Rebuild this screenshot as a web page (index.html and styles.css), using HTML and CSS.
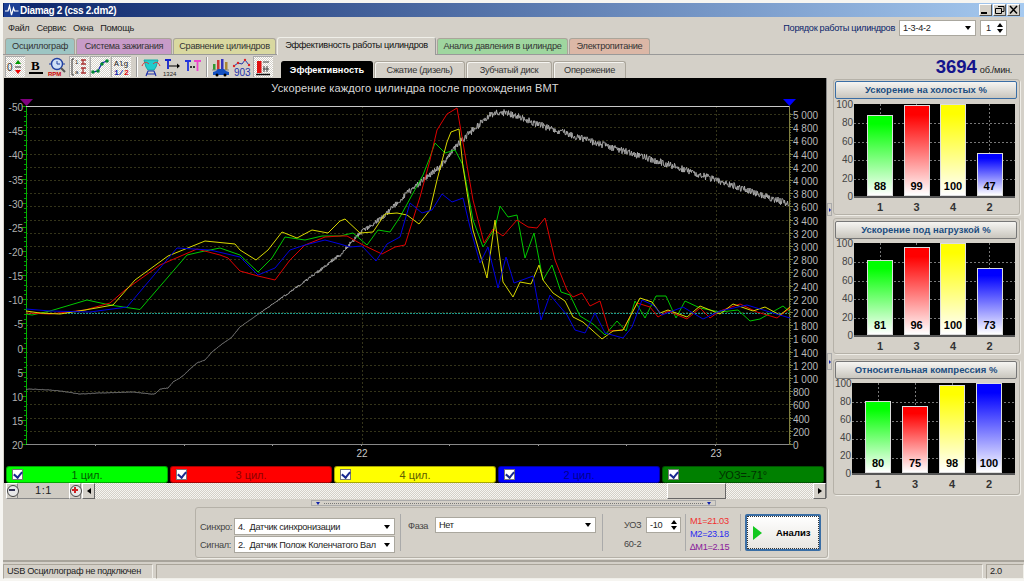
FILE: index.html
```html
<!DOCTYPE html>
<html lang="ru">
<head>
    <meta charset="UTF-8">
    <title>Diamag 2</title>
    <link rel="stylesheet" href="styles.css">
</head>
<body>
<div class="window">
    <div class="titlebar">
        <svg class="app-icon" width="16" height="14" viewBox="0 0 16 14"><rect width="16" height="14" fill="#1c3f94"/><path d="M1 8h3l1.500-5 2 9 2-7 1 3h4" fill="none" stroke="#fff" stroke-width="1.200"/></svg>
        <span class="app-name">Diamag 2 (css 2.dm2)</span>
        <div class="win-buttons">
            <div class="win-btn"><svg width="11" height="10" viewBox="0 0 11 10"><rect x="1" y="7" width="6" height="2" fill="#000"/></svg></div>
            <div class="win-btn"><svg width="11" height="10" viewBox="0 0 11 10"><path d="M4 1.500h6v5H8M1.500 3.500h6v5h-6z" fill="none" stroke="#000"/></svg></div>
            <div class="win-btn"><svg width="11" height="10" viewBox="0 0 11 10"><path d="M2 1l7 7.500M9 1L2 8.500" stroke="#000" stroke-width="1.500"/></svg></div>
        </div>
    </div>

    <div class="menubar">
        <span>Файл</span><span>Сервис</span><span>Окна</span><span>Помощь</span>
        <div class="cyl-order">
            <span class="cyl-label">Порядок работы цилиндров</span>
            <div class="combo combo-order"><span>1-3-4-2</span><i class="down"></i></div>
            <div class="spin spin-order"><span>1</span><div class="spin-arrows"><i class="up"></i><i class="down"></i></div></div>
        </div>
    </div>

    <div class="tabs">
        <div class="tab tab-osc">Осциллограф</div>
        <div class="tab tab-ign">Система зажигания</div>
        <div class="tab tab-cmp">Сравнение цилиндров</div>
        <div class="tab tab-eff">Эффективность работы цилиндров</div>
        <div class="tab tab-prs">Анализ давления в цилиндре</div>
        <div class="tab tab-pwr">Электропитание</div>
    </div>

    <div class="toolbar">
        <div class="tool pressed"><svg width="20" height="20" viewBox="0 0 20 20"><text x="2" y="14" class="ico-txt" font-size="10" fill="#333">0</text><path d="M13 3l3 4h-6z" fill="#090"/><path d="M10 10h6" stroke="#333"/><path d="M13 17l3-4h-6z" fill="#e00"/></svg></div>
        <div class="tool"><svg width="20" height="20" viewBox="0 0 20 20"><text x="5" y="13" class="ico-serif" font-size="13" fill="#000">B</text><path d="M3 16h14" stroke="#000" stroke-width="2"/></svg></div>
        <div class="tool"><svg width="20" height="20" viewBox="0 0 20 20"><circle cx="10" cy="7" r="5.500" fill="#cfe0f5" stroke="#2040a0" stroke-width="1.400"/><path d="M10 4v3h3M2 7h3M15 7h3" stroke="#2040a0" fill="none"/><path d="M14 11l4 4" stroke="#555" stroke-width="2"/><text x="1" y="19" class="ico-txt" font-size="6" font-weight="bold" fill="#c00">RPM</text></svg></div>
        <div class="tool gap-left pressed"><svg width="20" height="20" viewBox="0 0 20 20"><path d="M5 2H3v16h2" fill="none" stroke="#333"/><text x="6" y="7" class="ico-txt" font-size="6" fill="#333">1</text><text x="6" y="17" class="ico-txt" font-size="6" fill="#333">a</text><path d="M12 3h5M12 7h5M14 3v4M12 11h5M12 16h5M14 11v5" stroke="#a33" stroke-width="1.300"/></svg></div>
        <div class="tool pressed"><svg width="20" height="20" viewBox="0 0 20 20"><path d="M3 15l5-1 4-8 5-2" fill="none" stroke="#12a" stroke-width="1.200"/><circle cx="3" cy="15" r="1.800" fill="#083"/><circle cx="8" cy="14" r="1.800" fill="#083"/><circle cx="12" cy="7" r="1.800" fill="#083"/><circle cx="17" cy="4" r="1.800" fill="#083"/></svg></div>
        <div class="tool pressed"><svg width="20" height="20" viewBox="0 0 20 20"><text x="3" y="9" class="ico-mono" font-size="8" fill="#222">Alg</text><text x="3" y="18" class="ico-mono" font-size="8" font-weight="bold" fill="#12a">1/</text><text x="13" y="18" class="ico-mono" font-size="8" font-weight="bold" fill="#d11">2</text></svg></div>
        <div class="tool-sep sep-a"></div>
        <div class="tool"><svg width="20" height="20" viewBox="0 0 20 20"><path d="M3 3l14 0-2 7-2 3H7l-2-3z" fill="#2cc" stroke="#1aa"/><path d="M1 9c2-5 5-4 7-2M19 9c-2-5-5-4-7-2" fill="none" stroke="#d33"/><path d="M5 19l2-5h6l2 5M5 17h10" fill="none" stroke="#23a" stroke-width="1.200"/></svg></div>
        <div class="tool"><svg width="20" height="20" viewBox="0 0 20 20"><path d="M3 3h6M6 3v9" stroke="#12c" stroke-width="1.800"/><path d="M7 9h9" stroke="#000"/><path d="M18 9l-3-2.500v5z" fill="#000"/><text x="1" y="19" class="ico-txt" font-size="6" fill="#222">1324</text></svg></div>
        <div class="tool"><svg width="20" height="20" viewBox="0 0 20 20"><path d="M2 4h6M5 4v10" stroke="#23d" stroke-width="1.800"/><path d="M11 4h7M14.500 4v10" stroke="#e4c" stroke-width="1.800"/><path d="M7 10h5" stroke="#333" stroke-width="2" stroke-dasharray="2 1"/></svg></div>
        <div class="tool-sep"></div>
        <div class="tool"><svg width="20" height="20" viewBox="0 0 20 20"><rect x="2" y="7" width="2.500" height="6" fill="#393"/><rect x="6" y="3" width="2.500" height="10" fill="#c33"/><rect x="10" y="2" width="2.500" height="11" fill="#33b"/><rect x="14" y="5" width="2.500" height="8" fill="#a83"/><path d="M1 13h17" stroke="#888"/><path d="M2 18v-3l3-1 2-2h6l2 2 3 1v3z" fill="#124fc0"/><circle cx="6" cy="18" r="1.500" fill="#000"/><circle cx="14" cy="18" r="1.500" fill="#000"/></svg></div>
        <div class="tool"><svg width="20" height="20" viewBox="0 0 20 20"><path d="M2 9l4-3 4 1 3-4 4 5" fill="none" stroke="#23a"/><circle cx="2" cy="9" r="1.200" fill="#d22"/><circle cx="6" cy="6" r="1.200" fill="#d22"/><circle cx="13" cy="3" r="1.200" fill="#d22"/><circle cx="17" cy="8" r="1.200" fill="#d22"/><text x="2" y="19" class="ico-txt" font-size="10" fill="#23a">903</text></svg></div>
        <div class="tool pressed"><svg width="20" height="20" viewBox="0 0 20 20"><rect x="4" y="4" width="4.500" height="12" fill="#e01010"/><path d="M10 5h6M11 9v6M14 9v6M10 12h6" stroke="#444"/><path d="M3 17.500h14" stroke="#111" stroke-width="1.500"/></svg></div>

        <div class="subtabs">
            <div class="subtab active">Эффективность</div>
            <div class="subtab sub-comp">Сжатие (дизель)</div>
            <div class="subtab sub-gear">Зубчатый диск</div>
            <div class="subtab sub-adv">Опережение</div>
        </div>
        <div class="rpm"><b>3694</b><span>об./мин.</span></div>
    </div>

    <div class="workspace">
        <div class="scope">
            <svg id="scope-plot" class="scope-plot" width="822" height="387" viewBox="4 78 822 387"></svg>
            <div class="legend">
                <div class="leg leg-1"><span class="check"></span><span class="leg-name">1 цил.</span></div>
                <div class="leg leg-3"><span class="check"></span><span class="leg-name">3 цил.</span></div>
                <div class="leg leg-4"><span class="check"></span><span class="leg-name">4 цил.</span></div>
                <div class="leg leg-2"><span class="check"></span><span class="leg-name">2 цил.</span></div>
                <div class="leg leg-u"><span class="check"></span><span class="leg-name">УОЗ=-71°</span></div>
            </div>
            <div class="scroller">
                <div class="zoom-btn minus"></div>
                <div class="zoom-val">1:1</div>
                <div class="zoom-btn plus"></div>
                <div class="arrow-btn"><i class="left"></i></div>
                <div class="track"><div class="thumb"></div></div>
                <div class="arrow-btn"><i class="right"></i></div>
            </div>
        </div>

        <div class="v-split">
            <div class="grip grip-a"><i class="right"></i></div>
            <div class="grip grip-b"><i class="right"></i></div>
        </div>

        <div class="side">
            <section class="bars bars-a">
                <div class="bars-head focused">Ускорение на холостых %</div>
                <div class="bars-body">
                    <div class="y-labels"><span>100</span><span>80</span><span>60</span><span>40</span><span>20</span><span>0</span></div>
                    <div class="plot">
                        <div class="col"><div class="bar c-green" style="height:88%"><em>88</em></div></div>
                        <div class="col"><div class="bar c-red" style="height:99%"><em>99</em></div></div>
                        <div class="col"><div class="bar c-yellow" style="height:100%"><em>100</em></div></div>
                        <div class="col"><div class="bar c-blue" style="height:47%"><em>47</em></div></div>
                    </div>
                </div>
                <div class="x-labels"><span>1</span><span>3</span><span>4</span><span>2</span></div>
            </section>
            <section class="bars bars-b">
                <div class="bars-head">Ускорение под нагрузкой %</div>
                <div class="bars-body">
                    <div class="y-labels"><span>100</span><span>80</span><span>60</span><span>40</span><span>20</span><span>0</span></div>
                    <div class="plot">
                        <div class="col"><div class="bar c-green" style="height:81%"><em>81</em></div></div>
                        <div class="col"><div class="bar c-red" style="height:96%"><em>96</em></div></div>
                        <div class="col"><div class="bar c-yellow" style="height:100%"><em>100</em></div></div>
                        <div class="col"><div class="bar c-blue" style="height:73%"><em>73</em></div></div>
                    </div>
                </div>
                <div class="x-labels"><span>1</span><span>3</span><span>4</span><span>2</span></div>
            </section>
            <section class="bars bars-c">
                <div class="bars-head">Относительная компрессия %</div>
                <div class="bars-body">
                    <div class="y-labels"><span>100</span><span>80</span><span>60</span><span>40</span><span>20</span><span>0</span></div>
                    <div class="plot">
                        <div class="col"><div class="bar c-green" style="height:80%"><em>80</em></div></div>
                        <div class="col"><div class="bar c-red" style="height:75%"><em>75</em></div></div>
                        <div class="col"><div class="bar c-yellow" style="height:98%"><em>98</em></div></div>
                        <div class="col"><div class="bar c-blue" style="height:100%"><em>100</em></div></div>
                    </div>
                </div>
                <div class="x-labels"><span>1</span><span>3</span><span>4</span><span>2</span></div>
            </section>
        </div>
    </div>

    <div class="h-split"><div class="h-grip"><i class="down"></i><span class="dots"></span><i class="down blue"></i></div></div>

    <div class="params-row">
        <div class="params">
            <div class="p-sensors">
                <div class="p-line"><label>Синхро:</label><div class="combo combo-sensor"><span>4.&nbsp; Датчик синхронизации</span><i class="down"></i></div></div>
                <div class="p-line"><label>Сигнал:</label><div class="combo combo-sensor"><span>2.&nbsp; Датчик Полож Коленчатого Вал</span><i class="down"></i></div></div>
            </div>
            <div class="p-phase">
                <label>Фаза</label>
                <div class="combo combo-phase"><span>Нет</span><i class="down"></i></div>
            </div>
            <div class="p-uoz">
                <div class="p-line"><label>УОЗ</label><div class="spin spin-uoz"><span>-10</span><div class="spin-arrows"><i class="up"></i><i class="down"></i></div></div></div>
                <div class="p-wheel">60-2</div>
            </div>
            <div class="p-marks">
                <div class="m1">M1=21.03</div>
                <div class="m2">M2=23.18</div>
                <div class="dm">∆M1=2.15</div>
            </div>
            <div class="p-run">
                <div class="run-btn"><i class="play"></i><b>Анализ</b></div>
            </div>
        </div>
    </div>

    <div class="statusbar">
        <div class="st st-a">USB Осциллограф не подключен</div>
        <div class="st st-b"></div>
        <div class="st st-c">2.0</div>
    </div>
</div>
<script src="chart.js"></script>
</body>
</html>
```

FILE: styles.css
```css
* {
    box-sizing: border-box;
}
body {
    margin: 0;
    height: 581px;
    overflow: hidden;
    background-color: #f6f5f1;
    font-family: "Liberation Sans", Arial, sans-serif;
    font-size: 9.2px;
    letter-spacing: -0.3px;
    color: #222;
}
i {
    display: block;
    width: 0;
    height: 0;
}
i.down {
    border: 3.5px solid transparent;
    border-bottom: 0;
    border-top: 4px solid #000;
}
i.up {
    border: 3.5px solid transparent;
    border-top: 0;
    border-bottom: 4px solid #000;
}
i.left {
    border: 3.5px solid transparent;
    border-left: 0;
    border-right: 4px solid #000;
}
i.right {
    border: 3.5px solid transparent;
    border-right: 0;
    border-left: 4px solid #000;
}
.window {
    margin: 3px 0 0 3px;
    width: 1021px;
    height: 575px;
    background-color: #d4d0c8;
    display: flex;
    flex-direction: column;
}

/* title + menu */
.titlebar {
    height: 14px;
    flex: none;
    display: flex;
    align-items: center;
    padding-left: 1px;
    background: linear-gradient(to right, #0a246a, #a6caf0);
    color: #fff;
}
.app-name {
    font-weight: bold;
    font-size: 10px;
}
.win-buttons {
    margin-left: auto;
    margin-right: 4px;
    display: flex;
    gap: 1px;
}
.win-btn {
    width: 13px;
    height: 12px;
    background-color: #d4d0c8;
    border: 1px solid;
    border-color: #fff #555 #555 #fff;
    display: flex;
    align-items: center;
    justify-content: center;
}
.menubar {
    height: 21px;
    flex: none;
    display: flex;
    align-items: center;
    gap: 7px;
    padding-left: 5px;
}
.cyl-order {
    margin-left: auto;
    margin-right: 17px;
    display: flex;
    align-items: center;
}
.cyl-label {
    color: #0a246a;
    margin-right: 4px;
}
.combo {
    height: 16px;
    background-color: #fff;
    border: 1px solid #aaa79e;
    display: flex;
    align-items: center;
    justify-content: space-between;
    padding: 0 4px 0 3px;
    white-space: nowrap;
    overflow: hidden;
}
.combo-order {
    width: 77px;
}
.spin {
    height: 16px;
    background-color: #fff;
    border: 1px solid #aaa79e;
    display: flex;
    align-items: center;
    justify-content: space-between;
    padding: 0 3px 0 5px;
}
.spin-arrows {
    display: flex;
    flex-direction: column;
    gap: 2px;
}
.spin-order {
    width: 27px;
    margin-left: 4px;
}

/* tabs */
.tabs {
    height: 17px;
    flex: none;
    display: flex;
    align-items: flex-end;
    padding-left: 2px;
    gap: 1px;
    border-bottom: 1px solid #999;
}
.tab {
    height: 16px;
    line-height: 15px;
    text-align: center;
    border: 1px solid #aaa59a;
    border-bottom: 0;
    border-radius: 3px 3px 0 0;
    white-space: nowrap;
    color: #333;
}
.tab-osc { width: 70px; background-color: #9dc5c3; }
.tab-ign { width: 96px; background-color: #c89bc8; }
.tab-cmp { width: 103px; background-color: #d9d8a0; }
.tab-eff {
    width: 159px;
    height: 18px;
    margin-bottom: -1px;
    background-color: #d4d0c8;
    border-color: #f0efe9 #999 #d4d0c8 #f0efe9;
    color: #111;
}
.tab-prs { width: 131px; background-color: #9fd69f; }
.tab-pwr { width: 81px; background-color: #dcb7a6; }

/* toolbar */
.toolbar {
    height: 23px;
    flex: none;
    display: flex;
    align-items: center;
    padding-left: 2px;
}
.tool {
    width: 20px;
    height: 21px;
    flex: none;
    display: flex;
    align-items: center;
    justify-content: center;
}
.tool + .tool {
    margin-left: 1px;
}
.tool.pressed {
    background: repeating-conic-gradient(#d4d0c8 0 25%, #fff 0 50%) 0 0 / 2px 2px;
    border-top: 1px solid #aaa;
    border-left: 1px solid #aaa;
}
.tool.pressed svg {
    margin: -1px 0 0 -1px;
    flex: none;
}
.tool.gap-left {
    margin-left: 2px;
}
.tool-sep {
    width: 2px;
    height: 20px;
    margin: 0 3px;
    flex: none;
    border-left: 1px solid #999;
    border-right: 1px solid #fff;
}
.tool-sep.sep-a {
    margin-left: 5px;
}
.ico-txt { font-family: "Liberation Sans", Arial, sans-serif; letter-spacing: 0; }
.ico-serif { font-family: "Liberation Serif", serif; font-weight: bold; }
.ico-mono { font-family: "Liberation Mono", monospace; letter-spacing: 0; }
.subtabs {
    display: flex;
    align-self: flex-end;
    margin-left: 8px;
    gap: 1px;
}
.subtab {
    height: 17px;
    line-height: 16px;
    text-align: center;
    border: 1px solid #aaa59a;
    border-bottom: 0;
    border-radius: 3px 3px 0 0;
    background-color: #d4d0c8;
    box-shadow: inset 1px 1px 0 #f5f4f0;
    color: #333;
}
.subtab.active {
    width: 92px;
    background-color: #000;
    color: #fff;
    font-weight: bold;
    border-color: #000;
    box-shadow: none;
    letter-spacing: 0;
}
.sub-comp { width: 91px; }
.sub-gear { width: 86px; }
.sub-adv { width: 73px; }
.rpm {
    margin-left: auto;
    margin-right: 12px;
    display: flex;
    align-items: baseline;
    gap: 3px;
}
.rpm b {
    font-size: 18.5px;
    color: #14148c;
    letter-spacing: 0;
}

/* main part */
.workspace {
    height: 420px;
    flex: none;
    display: flex;
}
.scope {
    width: 823px;
    flex: none;
    margin-left: 1px;
    background-color: #000;
    display: flex;
    flex-direction: column;
    border-right: 1px solid #888;
}
.scope-plot {
    display: block;
    flex: none;
    font-family: "Liberation Sans", Arial, sans-serif;
    letter-spacing: 0;
}
.legend {
    display: flex;
    gap: 2px;
    height: 19px;
    padding: 1px 2px 0;
}
.leg {
    width: 162px;
    height: 17px;
    border-radius: 3px;
    border: 1px solid rgba(0, 0, 0, 0.35);
    display: flex;
    align-items: center;
    padding-left: 5px;
    font-size: 11px;
    letter-spacing: 0;
}
.leg-name {
    flex: 1;
    text-align: center;
    padding-right: 16px;
}
.leg-1 { background-color: #00ff00; color: #006000; }
.leg-3 { background-color: #ff0000; color: #900000; }
.leg-4 { background-color: #ffff00; color: #606000; }
.leg-2 { background-color: #0000ff; color: #000090; }
.leg-u { background-color: #008000; color: #003000; }
.check {
    width: 11px;
    height: 11px;
    background-color: #fff;
    border: 1px solid #777;
    position: relative;
}
.check::after {
    content: "";
    position: absolute;
    left: 2px;
    top: 0;
    width: 4px;
    height: 6px;
    border: solid #1a2a90;
    border-width: 0 2px 2px 0;
    transform: rotate(40deg);
}
.scroller {
    flex: 1;
    display: flex;
    background-color: #d4d0c8;
    padding-left: 2px;
    align-items: stretch;
}
.zoom-btn {
    width: 12px;
    position: relative;
    background-color: #d4d0c8;
    border: 1px solid;
    border-color: #fff #888 #888 #fff;
}
.zoom-btn::before {
    content: "";
    position: absolute;
    left: 0;
    top: 1px;
    width: 10px;
    height: 10px;
    border-radius: 50%;
    border: 1px solid #444;
    background-color: #e8e8e8;
}
.zoom-btn::after {
    content: "";
    position: absolute;
    left: 2px;
    top: 3px;
    width: 6px;
    height: 6px;
    background: linear-gradient(#335, #335) center / 6px 2px no-repeat;
}
.zoom-btn.plus::after {
    background:
        linear-gradient(#c22, #c22) center / 6px 2px no-repeat,
        linear-gradient(#c22, #c22) center / 2px 6px no-repeat;
}
.zoom-val {
    width: 51px;
    text-align: center;
    font-size: 11px;
    line-height: 15px;
    letter-spacing: 0.5px;
    border-bottom: 1px solid #888;
    background-color: #cfcbc3;
}
.arrow-btn {
    width: 13px;
    background-color: #d4d0c8;
    border: 1px solid;
    border-color: #fff #666 #666 #fff;
    display: flex;
    align-items: center;
    justify-content: center;
}
.zoom-btn.plus {
    margin-right: 1px;
}
.track {
    flex: 1;
    display: flex;
    padding-left: 572px;
    background: repeating-conic-gradient(#d4d0c8 0 25%, #f6f5f1 0 50%) 0 0 / 2px 2px;
}
.thumb {
    width: 59px;
    background-color: #d4d0c8;
    border: 1px solid;
    border-color: #fff #666 #666 #fff;
}
.v-split {
    width: 6px;
    flex: none;
    position: relative;
}
.grip {
    position: absolute;
    left: 0;
    width: 5px;
    background-color: #d4d0c8;
    border: 1px solid #aaa;
    display: flex;
    align-items: center;
    justify-content: center;
}
.grip i.right {
    border-width: 2px 0 2px 2px;
    border-left-color: #12a;
}
.grip-a { top: 125px; height: 13px; }
.grip-b { top: 275px; height: 17px; }

/* bar charts on the right */
.side {
    width: 187px;
    flex: none;
    display: flex;
    flex-direction: column;
    gap: 3px;
    padding-top: 1px;
}
.bars {
    height: 136px;
    flex: none;
    border: 1px solid #b5b1a8;
    border-radius: 3px;
    padding: 1px 2px 0 1px;
    box-shadow: 1px 1px 0 #eeece6;
}
.bars-head {
    height: 18px;
    line-height: 16px;
    text-align: center;
    font-weight: bold;
    color: #1b4d80;
    font-size: 9.5px;
    letter-spacing: 0;
    border: 1px solid #777;
    border-radius: 2px;
    background: linear-gradient(to bottom, #f6f5f2, #c9c6be);
}
.bars-head.focused {
    border-color: #3a6ea5;
}
.bars-body {
    display: flex;
    margin-top: 5px;
    height: 94px;
}
.y-labels {
    width: 19px;
    flex: none;
    display: flex;
    flex-direction: column;
    justify-content: space-between;
    text-align: right;
    padding-right: 1px;
    margin: -5px 0;
    font-size: 10px;
    letter-spacing: 0;
    line-height: 12px;
    color: #444;
}
.plot {
    width: 161px;
    flex: none;
    background-color: #000;
    display: flex;
    gap: 10.5px;
    padding-left: 13px;
    align-items: stretch;
    border-bottom: 2px solid #555;
    background-image:
        linear-gradient(to right, #777 50%, transparent 50%),
        linear-gradient(to right, #777 50%, transparent 50%),
        linear-gradient(to right, #777 50%, transparent 50%),
        linear-gradient(to right, #777 50%, transparent 50%);
    background-size: 4px 1px;
    background-repeat: repeat-x;
    background-position: 0 19px, 0 38px, 0 56px, 0 75px;
}
.bars-b {
    padding-top: 2px;
}
.bars-b .bars-body {
    margin-top: 4px;
}
.bars-c {
    margin-top: 2px;
}
.bars-c .bars-body {
    margin-top: 4px;
    height: 92px;
}
.bars-c .y-labels {
    width: 17px;
}
.bars-c .plot {
    width: 163px;
    gap: 11px;
}
.col {
    width: 26px;
    flex: none;
    display: flex;
    flex-direction: column;
    justify-content: flex-end;
    background: linear-gradient(to bottom, #777 50%, transparent 50%) center top / 1px 4px repeat-y;
}
.bar {
    border: 1px solid #ddd;
    display: flex;
    align-items: flex-end;
    justify-content: center;
}
.bar em {
    font-style: normal;
    font-weight: bold;
    font-size: 11px;
    letter-spacing: 0;
    line-height: 17px;
    color: #000;
}
.c-green { background: linear-gradient(to bottom, #00ff00 10%, #fff); }
.c-red { background: linear-gradient(to bottom, #ff0000 10%, #fff); }
.c-yellow { background: linear-gradient(to bottom, #ffff00 10%, #fff); }
.c-blue { background: linear-gradient(to bottom, #0000ff 10%, #fff); }
.x-labels {
    display: flex;
    gap: 10.5px;
    padding-left: 32px;
    margin-top: 3px;
}
.bars-c .x-labels {
    padding-left: 30px;
    gap: 11px;
}
.x-labels span {
    width: 26px;
    text-align: center;
    font-weight: bold;
    font-size: 11px;
    letter-spacing: 0;
    color: #333;
}

/* lower panel */
.h-split {
    height: 9px;
    flex: none;
    padding-top: 2px;
    display: flex;
    justify-content: center;
}
.h-grip {
    width: 405px;
    height: 6px;
    border: 1px solid #aaa;
    display: flex;
    align-items: center;
    gap: 4px;
    padding: 0 4px;
}
.h-grip i.down {
    border-width: 3px 2.5px 0;
    border-top-color: #12a;
}
.dots {
    flex: 1;
    border-top: 1px dotted #777;
}
.params-row {
    height: 51px;
    flex: none;
    padding-left: 192px;
    border-bottom: 2px solid #a8a49b;
    box-sizing: content-box;
    padding-bottom: 2px;
}
.params {
    width: 633px;
    height: 51px;
    border: 1px solid #b5b1a8;
    border-radius: 3px;
    box-shadow: 1px 1px 0 #eeece6;
    display: flex;
    padding: 6px 0;
}
.params label {
    color: #444;
}
.p-sensors {
    width: 205px;
    flex: none;
    padding-left: 4px;
    padding-top: 4px;
    display: flex;
    flex-direction: column;
    gap: 1px;
    border-right: 1px solid #aaa;
}
.p-line {
    display: flex;
    align-items: center;
    justify-content: space-between;
    padding-right: 5px;
}
.combo-sensor {
    width: 161px;
    height: 17px;
}
.p-phase {
    width: 202px;
    flex: none;
    display: flex;
    padding: 3px 6px 0 7px;
    align-items: flex-start;
    justify-content: space-between;
    border-right: 1px solid #aaa;
}
.p-phase label {
    margin-top: 4px;
}
.combo-phase {
    width: 161px;
}
.p-uoz {
    width: 83px;
    flex: none;
    padding-left: 21px;
    padding-top: 3px;
    border-right: 1px solid #aaa;
}
.p-uoz .p-line {
    padding-right: 4px;
}
.spin-uoz {
    width: 35px;
    padding-left: 3px;
}
.p-wheel {
    margin-top: 6px;
    color: #444;
}
.p-marks {
    width: 55px;
    flex: none;
    padding-left: 4px;
    padding-top: 1px;
    line-height: 13px;
    border-right: 1px solid #aaa;
}
.m1 { color: #f03030; }
.m2 { color: #2a2af0; }
.dm { color: #8a1a9a; }
.p-run {
    flex: 1;
    padding-left: 4px;
}
.run-btn {
    width: 76px;
    height: 37px;
    border: 2px solid #3a6ea5;
    outline: 1px dotted #333;
    outline-offset: -3px;
    border-radius: 2px;
    background: linear-gradient(to bottom, #fff, #e8e6e0);
    display: flex;
    align-items: center;
    padding-left: 6px;
    font-size: 9.5px;
    letter-spacing: 0;
    color: #000;
}
.play {
    border: 7px solid transparent;
    border-right: 0;
    border-left: 9px solid #12c81e;
    margin-right: 14px;
}
.statusbar {
    height: 15px;
    margin-top: 2px;
    flex: none;
    display: flex;
    gap: 3px;
}
.st {
    border: 1px solid;
    border-color: #aaa59a #f0efe9 #f0efe9 #aaa59a;
    line-height: 13px;
    padding-left: 3px;
    white-space: nowrap;
}
.st-a { width: 150px; }
.st-b { flex: 1; }
.st-c { width: 38px; }
```

FILE: chart.js
```js
// Draws the scope plot. Coordinates below are the ones of the page (see the viewBox).
const plot = document.getElementById('scope-plot');
const LEFT = 26, RIGHT = 789, TOP = 106, BOTTOM = 444;

function add(tag, attrs, text) {
    const el = document.createElementNS('http://www.w3.org/2000/svg', tag);
    for (const key in attrs) el.setAttribute(key, attrs[key]);
    if (text !== undefined) el.textContent = text;
    plot.appendChild(el);
    return el;
}

function line(x1, y1, x2, y2, stroke, dash) {
    const attrs = { x1, y1, x2, y2, stroke };
    if (dash) attrs['stroke-dasharray'] = dash;
    add('line', attrs);
}

function label(x, y, text, anchor, fill) {
    add('text', { x, y, 'text-anchor': anchor, fill, 'font-size': 10 }, text);
}

add('text', { x: 415, y: 92, 'text-anchor': 'middle', fill: '#d8d8d8', 'font-size': 11.1, 'letter-spacing': 0.1 },
    'Ускорение каждого цилиндра после прохождения ВМТ');

// rpm grid + right axis
for (let rpm = 0; rpm <= 5000; rpm += 200) {
    const y = Math.round(BOTTOM - rpm * 0.066) + 0.5;
    if (rpm > 0) line(LEFT, y, RIGHT, y, '#34341a', '2 2');
    line(RIGHT, y, RIGHT + 4, y, '#808040');
    const txt = rpm >= 1000 ? Math.floor(rpm / 1000) + ' ' + String(rpm % 1000).padStart(3, '0') : String(rpm);
    label(RIGHT + 4, y + 4, txt, 'start', '#b8b8b8');
}
for (let y = BOTTOM; y > TOP + 8; y -= 2.64) line(RIGHT, y, RIGHT + 2, y, '#808040');

// crank axis
line(362.5, TOP, 362.5, BOTTOM, '#34341a', '2 2');
line(716.5, TOP, 716.5, BOTTOM, '#34341a', '2 2');
for (let x = 95; x < RIGHT; x += 88.5) line(Math.round(x) + 0.5, BOTTOM, Math.round(x) + 0.5, BOTTOM + 2, '#999');
label(362, 457, '22', 'middle', '#c8c8c8');
label(716, 457, '23', 'middle', '#c8c8c8');

// percent axis
for (let v = -50; v <= 20; v++) {
    const y = Math.round(347.6 + v * 4.83) + 0.5;
    const major = v % 5 === 0;
    line(LEFT - (major ? 4 : 2), y, LEFT, y, '#00a000');
    if (major) label(LEFT - 3, y + 4, String(v), 'end', '#b0b0b0');
}

line(LEFT + 0.5, TOP, LEFT + 0.5, BOTTOM, '#00b000');
line(RIGHT + 0.5, TOP, RIGHT + 0.5, BOTTOM, '#808040');
line(LEFT, TOP + 0.5, RIGHT, TOP + 0.5, '#c8c8c8');
line(LEFT, BOTTOM + 0.5, RIGHT, BOTTOM + 0.5, '#888');

add('polygon', { points: '20,99 33,99 26.500,106', fill: '#800080' });
add('polygon', { points: '783,99 796,99 789.500,106', fill: '#0000ff' });

line(LEFT, 313.5, RIGHT, 313.5, '#1c9a8c', '2 1');

// rpm trace, thin and darker at the start, noisy from the mid range
const rpmShape = [[26,389.5],[30,389],[50,390],[60,391],[80,394],[100,393],[133,392],[150,394],[155,394],[160,389],[168,388],
    [173,382],[180,378],[185,374],[190,369],[197,363],[205,360],[212,352],[222,344],[231,338],[240,327],[300,285],[340,255],[360,233],
    [383,217],[407,193],[440,167],[457,145],[473,130],[490,115],[500,112],[513,115],[540,125],[580,138],[680,168],[789,204]];

function shapeAt(x) {
    for (let i = 1; i < rpmShape.length; i++) {
        if (x <= rpmShape[i][0]) {
            const [x0, y0] = rpmShape[i - 1], [x1, y1] = rpmShape[i];
            return y0 + (y1 - y0) * (x - x0) / (x1 - x0);
        }
    }
    return rpmShape[rpmShape.length - 1][1];
}

let seed = 12345;
function rnd() {
    seed = (seed * 1103515 + 12345) % 2147483647;
    return seed / 2147483647;
}

let thin = [], noisy = [];
for (let x = LEFT; x <= RIGHT; x += 0.5) {
    const amp = x < 250 ? 0.2 : x < 340 ? (x - 250) / 45 : x < 460 ? 2 + (x - 340) / 80 : 3.5;
    const pt = x + ',' + (shapeAt(x) + (rnd() - 0.5) * 2 * amp).toFixed(1);
    if (x <= 260) thin.push(pt);
    if (x >= 260) noisy.push(pt);
}
add('polyline', { points: thin.join(' '), fill: 'none', stroke: '#858585', 'stroke-width': 1 });
add('polyline', { points: noisy.join(' '), fill: 'none', stroke: '#a8a8a8', 'stroke-width': 1 });

// cylinder traces
const traces = [
    ['#00c800', '26,314 32,315 50,311 87,300 110,305 140,309.500 187,255 200,252 220,248 240,255 258,272 272,258 285,237 305,240 322,236 340,236 353,233 367,245 378,230 390,232 400,217 412,195 423,175 430,157 435,143 445,153 455,150 463,165 473,220 483,247 495,228 500,206 508,217 517,215 525,258 534,233 543,280 552,265 561,292 570,295 580,316 593,324 605,335 617,321 626,331 635,301 645,318 656,296 666,296 676,318 685,301 700,308 720,312 738,310 750,321 760,319 783,306 790,312'],
    ['#e00000', '26,313 50,314 85,310 110,303 125,290 160,265 197,249 220,255 228,258 240,271 258,276 275,280 290,260 305,245 325,237 340,236 347,236 363,245 382,254 395,247 405,245 420,197 430,160 437,130 447,114 457,108 462,137 473,200 484,243 493,229 503,236 517,220 528,227 537,228 545,218 555,260 567,290 573,297 582,293 590,306 600,301 609,331 623,330 637,303 650,307 658,317 668,311 687,319 700,308 710,318 720,311 740,304 757,312 777,318 790,308'],
    ['#d8d800', '26,311 40,313 60,314 85,310 113,305 135,280 168,256 205,241 225,243 235,244 240,250 256,260 268,250 282,232 297,238 312,230 328,233 340,221 345,219 360,233 373,232 385,214 397,213 407,215 419,224 430,210 437,180 447,142 451,132 459,129 463,167 473,230 487,278 495,220 503,282 513,297 520,282 531,284 539,265 543,280 553,293 565,301 573,317 583,322 602,339 613,331 623,330 640,298 652,302 660,313 668,310 687,317 700,306 720,314 733,304 753,311 765,307 780,315 790,307'],
    ['#0000e0', '26,309 50,311 90,312 127,307 177,248 210,250 240,257 258,275 275,268 290,250 305,245 325,240 340,244 350,247 362,246 376,261 387,244 400,237 410,203 422,213 432,210 442,194 452,202 463,198 470,227 480,263 488,247 498,288 506,257 514,283 533,276 541,320 550,295 567,315 575,330 585,333 595,313 605,333 623,338 632,327 642,300 653,305 662,315 683,307 703,319 720,311 747,305 773,313 790,318']
];
traces.forEach(([color, points]) => add('polyline', { points, fill: 'none', stroke: color, 'stroke-width': 1 }));
```
